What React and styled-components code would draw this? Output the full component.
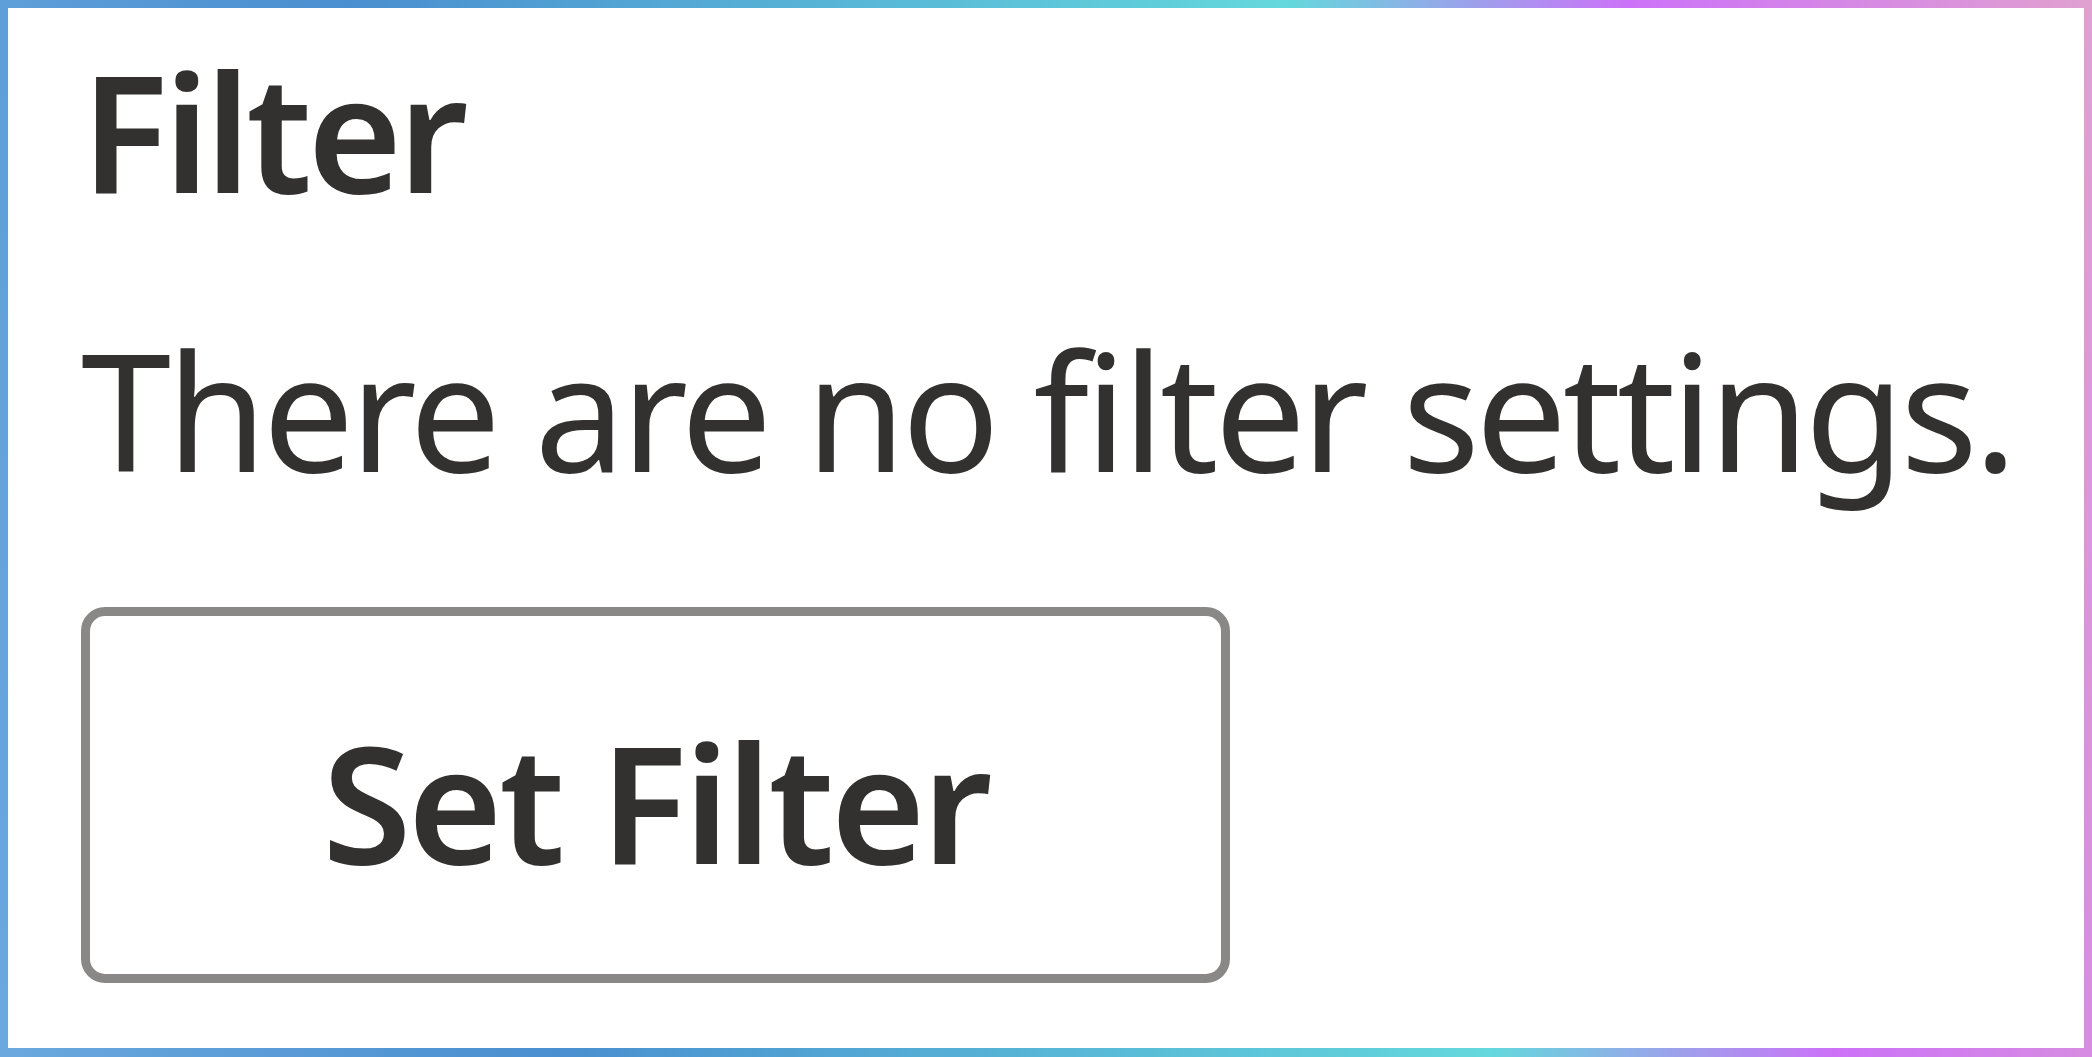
import React from "react";
import styled, { createGlobalStyle } from "styled-components";

const Global = createGlobalStyle`
  html, body { margin: 0; padding: 0; background: #ffffff; }
  * { box-sizing: border-box; }
`;

const Frame = styled.div`
  height: 100vh;
  width: 100vw;
  border-style: solid;
  border-width: 8px 8px 9px 8px;
  border-image: linear-gradient(79deg, #6aa8de 0%, #4a8fd0 24%, #64d8dc 65%, #cc72f8 80%, #e0a0d0 100%) 1;
  background: #ffffff;
  padding: 41px 0 0 73px;
  display: flex;
  flex-direction: column;
  align-items: flex-start;
  gap: 117px;
  font-family: "Noto Sans", "Open Sans", sans-serif;
  color: #323130;
  overflow: hidden;
`;

const Title = styled.h2`
  margin: 0;
  font-size: 162px;
  line-height: 162px;
  font-weight: 600;
  letter-spacing: -4.5px;
  white-space: nowrap;
`;

const Message = styled.p`
  margin: 0;
  font-size: 162px;
  line-height: 162px;
  font-weight: 400;
  letter-spacing: -4.2px;
  white-space: nowrap;
`;

const Button = styled.button`
  width: 1149px;
  height: 376px;
  padding: 12px 0 0 0;
  border: 9px solid #8a8886;
  border-radius: 24px;
  background: #ffffff;
  color: #323130;
  font-family: inherit;
  font-size: 162px;
  font-weight: 600;
  letter-spacing: -3.5px;
  line-height: 1;
  display: flex;
  align-items: center;
  justify-content: center;
  white-space: nowrap;
  cursor: pointer;
`;

export default function App() {
  return (
    <>
      <Global />
      <Frame>
        <Title>Filter</Title>
        <Message>There are no filter settings.</Message>
        <Button>Set Filter</Button>
      </Frame>
    </>
  );
}
